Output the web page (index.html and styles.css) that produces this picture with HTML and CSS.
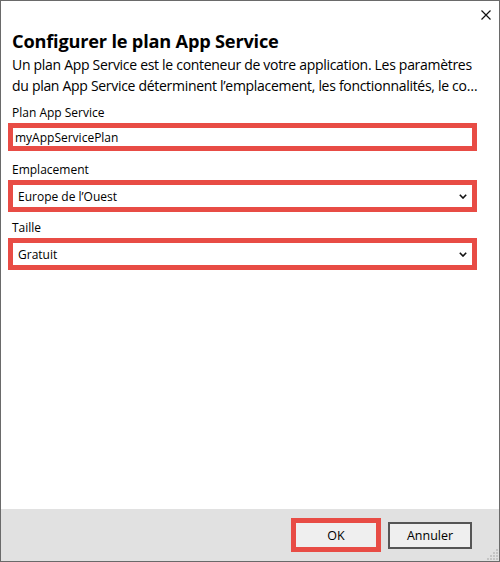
FILE: index.html
```html
<!DOCTYPE html>
<html lang="fr">
<head>
<meta charset="utf-8">
<title>Configurer le plan App Service</title>
<link rel="stylesheet" href="styles.css">
</head>
<body>
<div class="window">
  <div class="titlebar">
    <svg class="close" width="10" height="10" viewBox="0 0 10 10"><path d="M0.5 0.5 L9.5 9.5 M9.5 0.5 L0.5 9.5" stroke="#111" stroke-width="1.2" fill="none"/></svg>
  </div>
  <div class="content">
    <h1 class="title">Configurer le plan App Service</h1>
    <p class="desc"><span class="line">Un plan App Service est le conteneur de votre application. Les paramètres</span><span class="line">du plan App Service déterminent l’emplacement, les fonctionnalités, le co…</span></p>
    <div class="label first">Plan App Service</div>
    <div class="field input">myAppServicePlan</div>
    <div class="label">Emplacement</div>
    <div class="field select"><span>Europe de l’Ouest</span><svg class="chev" width="8" height="5" viewBox="0 0 8 5"><path d="M0.8 0.8 L4 4 L7.2 0.8" stroke="#111" stroke-width="1.6" fill="none"/></svg></div>
    <div class="label">Taille</div>
    <div class="field select"><span>Gratuit</span><svg class="chev" width="8" height="5" viewBox="0 0 8 5"><path d="M0.8 0.8 L4 4 L7.2 0.8" stroke="#111" stroke-width="1.6" fill="none"/></svg></div>
  </div>
  <div class="footer">
    <button class="btn ok">OK</button>
    <button class="btn cancel">Annuler</button>
    <svg class="grip" width="12" height="12" viewBox="0 0 12 12">
      <g fill="#c4c4c4">
        <rect x="10" y="1" width="2" height="2"/>
        <rect x="7" y="4" width="2" height="2"/><rect x="10" y="4" width="2" height="2"/>
        <rect x="4" y="7" width="2" height="2"/><rect x="7" y="7" width="2" height="2"/><rect x="10" y="7" width="2" height="2"/>
        <rect x="1" y="10" width="2" height="2"/><rect x="4" y="10" width="2" height="2"/><rect x="7" y="10" width="2" height="2"/><rect x="10" y="10" width="2" height="2"/>
      </g>
    </svg>
  </div>
</div>
</body>
</html>
```
FILE: styles.css
```css
* { box-sizing: border-box; }
html, body { margin: 0; padding: 0; }
body {
  font-family: "Open Sans", "Noto Sans", sans-serif;
  color: #000;
  background: #fff;
}
.window {
  width: 500px;
  height: 562px;
  border: 1px solid #6a6a6a;
  display: flex;
  flex-direction: column;
  background: #fff;
}
.titlebar {
  height: 27px;
  display: flex;
  justify-content: flex-end;
  align-items: flex-start;
  padding: 9px 8px 0 0;
}
.close { display: block; }
.content {
  flex: 1;
  padding: 0 22px 0 7px;
}
.title {
  margin: 0 0 0 4px;
  font-size: 18.2px;
  font-weight: 700;
  line-height: 26px;
  letter-spacing: -0.2px;
}
.desc {
  margin: 0 -12px 7px 4px;
  font-size: 14px;
  line-height: 21px;
  display: flex;
  flex-direction: column;
}
.line {
  white-space: nowrap;
  letter-spacing: -0.3px;
}
.label {
  margin: 9px 0 0 4px;
  font-size: 12px;
  line-height: 20px;
}
.label.first { margin-top: 0; }
.field {
  border: 5px solid #e84c45;
  background: #fff;
  font-size: 12px;
  display: flex;
  align-items: center;
}
.input {
  height: 28px;
  padding-left: 2px;
}
.select {
  height: 32px;
  padding: 0 5px;
  justify-content: space-between;
}
.select + .label { margin-top: 6px; }
.chev { display: block; }
.footer {
  height: 52px;
  background: #e1e1e1;
  display: flex;
  justify-content: flex-end;
  align-items: center;
  padding-right: 27px;
  gap: 7px;
  position: relative;
}
.btn {
  font-family: inherit;
  font-size: 12.5px;
  color: #000;
  background: #efefef;
  padding: 0;
}
.ok {
  width: 90px;
  height: 34px;
  border: 5px solid #e84c45;
}
.cancel {
  width: 84px;
  height: 27px;
  border: 2px solid #555;
}
.grip {
  position: absolute;
  right: 1px;
  bottom: 1px;
}
```
